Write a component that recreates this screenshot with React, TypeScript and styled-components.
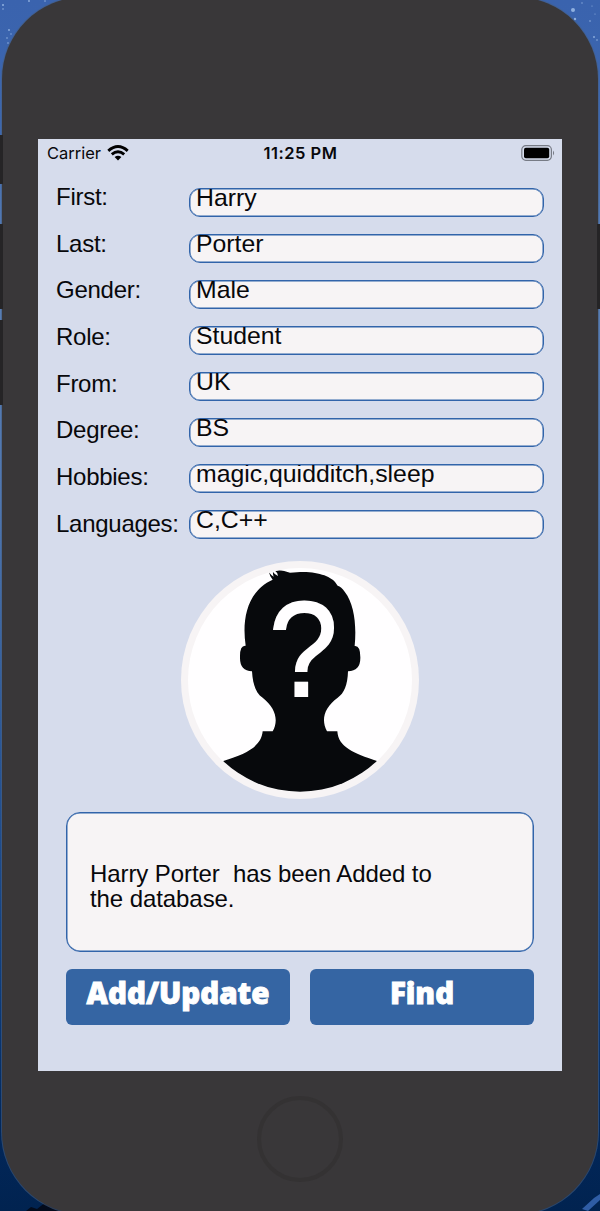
import React from "react";
import styled, { createGlobalStyle } from "styled-components";

const Global = createGlobalStyle`
  *, *::before, *::after { box-sizing: border-box; }
  body { margin: 0; background: #04275a; }
`;

const Desktop = styled.main`
  position: relative;
  width: 600px;
  height: 1211px;
  overflow: hidden;
  display: flex;
  justify-content: center;
  background: linear-gradient(#3a63ae 0, #3c66ae 120px, #5a7fb5 260px, #4f76b0 500px, #285596 760px, #0d3a78 1000px, #02275a 1130px, #012350 1211px);
`;

const Stars = styled.svg`
  position: absolute;
  inset: 0;
`;

const Phone = styled.div`
  position: relative;
  width: 596px;
  height: 1217px;
  flex: none;
  margin-top: -3px;
  border-radius: 82px;
  background: #393739;
  box-shadow: 0 0 0 1px rgba(70, 95, 130, 0.6);
  display: flex;
  flex-direction: column;
  align-items: center;
  padding-top: 141.5px;
`;

const SideButton = styled.span<{ $side: "left" | "right"; $top: number; $height: number }>`
  position: absolute;
  ${(p) => p.$side}: -2px;
  top: ${(p) => p.$top}px;
  width: 3px;
  height: ${(p) => p.$height}px;
  background: #252426;
`;

const Screen = styled.section`
  width: 524px;
  height: 932.5px;
  flex: none;
  background: #d6dcec;
  color: #08080b;
  font-family: "Liberation Sans", Arial, sans-serif;
`;

const StatusBar = styled.header`
  height: 29px;
  padding: 0 8px 0 9px;
  display: grid;
  grid-template-columns: 1fr auto 1fr;
  align-items: center;
  font-family: Inter, "Liberation Sans", sans-serif;
  font-size: 16.5px;
`;

const Carrier = styled.span`
  display: flex;
  align-items: center;
  gap: 6px;
`;

const Clock = styled.time`
  font-weight: 600;
  letter-spacing: 0.5px;
`;

const Battery = styled.svg`
  justify-self: end;
  margin: -1px -1px 0 0;
`;

const Form = styled.div`
  display: flex;
  height: 394px;
  padding: 20px 18px 0;
`;

const Labels = styled.div`
  width: 133px;
  flex: none;
  margin-top: -4.6px;
`;

const Label = styled.label`
  display: block;
  height: 46.7px;
  font-size: 24px;
  line-height: 28px;
  letter-spacing: -0.27px;
`;

const Fields = styled.div`
  flex: 1;
  display: flex;
  flex-direction: column;
  gap: 16.5px;
`;

const Field = styled.div`
  height: 29.5px;
  border: 1px solid #3164aa;
  box-shadow: inset 0 0 0 0.5px #3164aa;
  border-radius: 11px;
  background: #f7f4f5;
  overflow: hidden;
  padding-left: 6px;
`;

const Value = styled.span`
  display: block;
  margin-top: -5px;
  font-size: 24.8px;
  line-height: 28px;
  white-space: nowrap;
`;

const Avatar = styled.svg`
  display: block;
  margin: -1px auto 0;
`;

const Message = styled.p`
  width: 468px;
  height: 140px;
  margin: 13.5px auto 0;
  padding: 48px 23px 0;
  border: 1px solid #3164aa;
  box-shadow: inset 0 0 0 0.5px #3164aa;
  border-radius: 14px;
  background: #f7f4f5;
  font-size: 24px;
  line-height: 25.4px;
  letter-spacing: -0.08px;
  white-space: pre;
`;

const Actions = styled.div`
  display: flex;
  justify-content: space-between;
  width: 468px;
  margin: 16.5px auto 0;
`;

const ActionButton = styled.button`
  width: 224px;
  height: 56px;
  padding: 0 0 7px;
  border: 0;
  border-radius: 6px;
  background: #3565a3;
  color: #fff;
  font-family: "Noto Sans", "Open Sans", sans-serif;
  font-weight: 900;
  font-size: 29.5px;
  line-height: 40px;
  -webkit-text-stroke: 0.9px #fff;
  stroke-linejoin: round;
`;

const HomeButton = styled.div`
  width: 86px;
  height: 86px;
  margin-top: 25px;
  border: 4px solid #343233;
  border-radius: 50%;
`;

const entries = [
  ["First:", "Harry"],
  ["Last:", "Porter"],
  ["Gender:", "Male"],
  ["Role:", "Student"],
  ["From:", "UK"],
  ["Degree:", "BS"],
  ["Hobbies:", "magic,quidditch,sleep"],
  ["Languages:", "C,C++"],
];

const stars = [
  [3, 5, 1], [3, 9, 0.8], [29, 1, 0.9], [45, 1, 0.8], [9, 30, 0.9], [11, 34, 0.7], [7, 38, 0.8], [8, 43, 0.8],
  [573, 10, 2], [575, 19, 1.2], [590, 21, 0.8], [594, 37, 0.9], [582, 3, 0.7], [597, 40, 0.8], [592, 6, 0.6], [595, 14, 0.6],
];

function Portrait() {
  return (
    <Avatar width="238" height="238" viewBox="33 32 714 714" aria-label="Unknown person">
      <defs>
        <clipPath id="face"><circle cx="390" cy="389" r="335" /></clipPath>
      </defs>
      <circle cx="390" cy="389" r="357" fill="#f7f4f5" />
      <circle cx="390" cy="389" r="336" fill="#fffeff" />
      <path
        clipPath="url(#face)"
        fill="#07090c"
        d="M308 88 Q299 78 297 66 Q303 75 311 79 Q308 71 309 65 Q314 73 324 77 Q323 66 315 61 Q333 56 360 67 C410 62 438 66 463 75 Q492 86 503 106 Q514 109 524 124 C553 161 560 224 554 287 Q571 285 571 321 Q572 362 534 363 C533 403 522 430 503 442 C463 471 452 508 471 543 L502 543 C505 590 550 609 621 632 L700 760 L80 760 L160 632 C230 610 274 588 278 543 L308 543 C326 511 318 474 278 442 C258 429 248 401 246 363 Q209 362 210 321 Q209 284 227 286 C216 213 228 124 308 88 Z"
      />
      <text
        transform="translate(400 438) scale(0.92 1.01)"
        textAnchor="middle"
        fontSize="403"
        fill="#fffeff"
        stroke="#fffeff"
        strokeWidth="6"
        fontFamily="Liberation Sans, Arial, sans-serif"
      >
        ?
      </text>
    </Avatar>
  );
}

export default function App() {
  return (
    <>
      <Global />
      <Desktop>
        <Stars width="600" height="1211">
          {stars.map(([x, y, r]) => (
            <circle key={`${x}-${y}`} cx={x} cy={y} r={r} fill="#8fb0e0" />
          ))}
          <path d="M26 1211 L31 1207 L37 1209 L46 1202 L66 1211 Z" fill="#030b1c" />
          <path d="M582 1209 L594 1198 L600 1194 V1200 L588 1211Z" fill="#2f5da5" />
        </Stars>
        <Phone>
          <SideButton $side="left" $top={138} $height={49} />
          <SideButton $side="left" $top={227} $height={85} />
          <SideButton $side="left" $top={323} $height={85} />
          <SideButton $side="right" $top={227} $height={85} />
          <Screen>
            <StatusBar>
              <Carrier>
                Carrier
                <svg width="22" height="16" viewBox="0 0 22 16" fill="none" stroke="#000" strokeWidth="2.9">
                  <path d="M1.3 5.8 Q11 -2.6 20.7 5.8" />
                  <path d="M4.8 9.4 Q11 4.1 17.2 9.4" />
                  <path d="M11 15.5 L7.6 12 Q11 9.3 14.4 12 Z" fill="#000" stroke="none" />
                </svg>
              </Carrier>
              <Clock>11:25 PM</Clock>
              <Battery width="34" height="16" viewBox="0 0 34 16">
                <rect x="0.8" y="0.7" width="29.6" height="14.6" rx="4" fill="none" stroke="#777b85" strokeWidth="1.2" />
                <rect x="3" y="2.8" width="25.2" height="10.4" rx="1.8" fill="#000" />
                <path d="M32 5.5 Q34.2 8 32 10.5Z" fill="#777b85" />
              </Battery>
            </StatusBar>
            <Form>
              <Labels>
                {entries.map(([label]) => <Label key={label}>{label}</Label>)}
              </Labels>
              <Fields>
                {entries.map(([label, value]) => (
                  <Field key={label}><Value>{value}</Value></Field>
                ))}
              </Fields>
            </Form>
            <Portrait />
            <Message>{"Harry Porter  has been Added to\nthe database."}</Message>
            <Actions>
              <ActionButton>Add/Update</ActionButton>
              <ActionButton>Find</ActionButton>
            </Actions>
          </Screen>
          <HomeButton />
        </Phone>
      </Desktop>
    </>
  );
}
